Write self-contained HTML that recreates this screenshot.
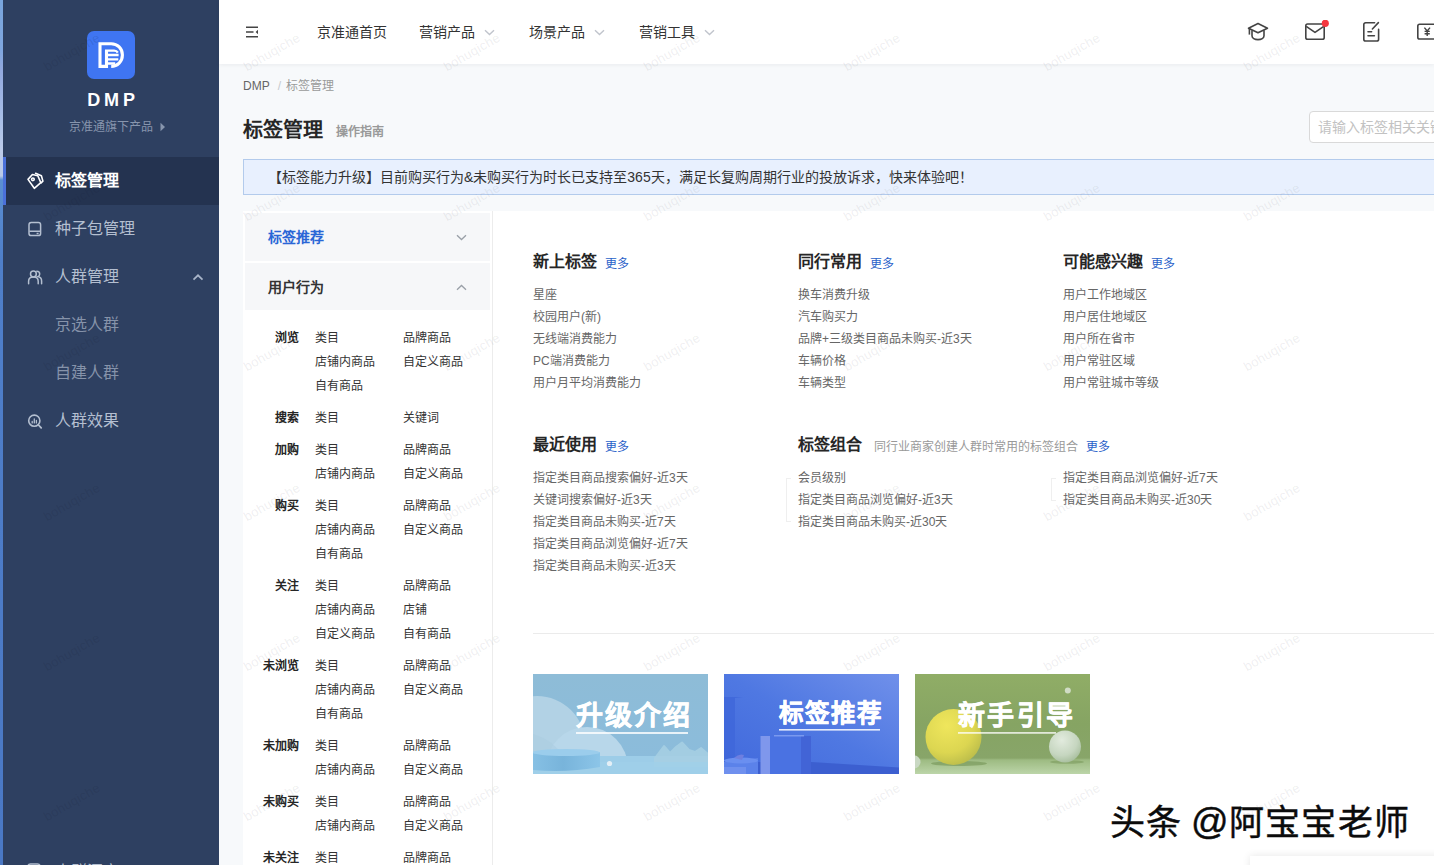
<!DOCTYPE html>
<html lang="zh-CN">
<head>
<meta charset="utf-8">
<title>DMP</title>
<style>
*{box-sizing:border-box;margin:0;padding:0}
html,body{width:1434px;height:865px;overflow:hidden;background:#f7f9fb;font-family:"Liberation Sans",sans-serif;color:#333}
#app{position:relative;width:1434px;height:865px;overflow:hidden;background:#f7f9fb}
.a{position:absolute;white-space:nowrap}
/* ---------- left edge strip + sidebar ---------- */
#strip{left:0;top:0;width:3px;height:865px;background:linear-gradient(180deg,#79a5dc 0,#7fa6de 50px,#93a9dd 70px,#a9bfe6 120px,#bccbe9 150px,#b9c9e8 176px,#5b8fd2 180px,#4f7fc9 260px,#4a78c4 865px)}
#side{left:3px;top:0;width:216px;height:865px;background:#2e4061}
#active{left:3px;top:157px;width:216px;height:48px;background:#243350}
#activebar{left:3px;top:157px;width:3px;height:48px;background:#4a70d9}
#logo{left:87px;top:31px;width:48px;height:48px;border-radius:7px;background:#3f75f2}
#dmp{left:3px;top:89px;width:216px;text-align:center;font-size:18px;line-height:22px;font-weight:bold;color:#fff;letter-spacing:3.8px;padding-left:4px}
#sub{left:69px;top:119px;font-size:12px;line-height:16px;color:#8795ad}
.mi{left:55px;font-size:16px;line-height:24px;color:#b4bfd0}
.mi.on{color:#fff;font-weight:bold}
.mi.s{color:#8693aa}
.ic{position:absolute}
/* ---------- top nav ---------- */
#top{left:219px;top:0;width:1215px;height:64px;background:#fff;box-shadow:0 1px 4px rgba(0,21,41,.06)}
.ni{top:22px;font-size:14px;line-height:20px;color:#333}
/* ---------- heading ---------- */
#bc{left:243px;top:78px;font-size:12px;line-height:16px;color:#666}
#bc i{font-style:normal;color:#c6c9ce;margin:0 5px 0 8px}
#bc span{color:#999}
#h1{left:243px;top:116px;font-size:20px;line-height:28px;font-weight:bold;color:#262626}
#guide{left:336px;top:124px;font-size:12px;line-height:16px;font-weight:bold;color:#999}
#search{left:1309px;top:111px;width:140px;height:32px;background:#fff;border:1px solid #d9d9d9;border-radius:4px}
#ph{left:1318px;top:117px;font-size:14px;line-height:20px;color:#c2c2c2}
#notice{left:243px;top:159px;width:1200px;height:36px;background:#e8f0fe;border:1px solid #b3cbec}
#ntxt{left:268px;top:167px;font-size:14px;line-height:20px;color:#333}

/* ---------- card ---------- */
#card{left:243px;top:211px;width:1200px;height:660px;background:#fff}
.ph{left:245px;width:245px;background:#f6f7f9}
.pt{left:268px;font-size:14px;line-height:20px;font-weight:bold;color:#333}
#vline{left:492px;top:211px;width:1px;height:660px;background:#ececec}
.r{left:243px;font-size:12px;line-height:24px;color:#333}
.r b{display:inline-block;width:56px;text-align:right;margin-right:16px;color:#262626}
.r span{display:inline-block;width:88px}
.st{font-size:16px;line-height:24px;font-weight:bold;color:#262626}
.more{font-size:12px;line-height:16px;color:#2a62c9}
.li{font-size:12px;line-height:22px;color:#666}
.desc{font-size:12px;line-height:16px;color:#999}
#hr{left:533px;top:633px;width:910px;height:1px;background:#ebebeb}
.bk{width:5px;border:1px solid #efefef;border-right:none}

.bn{top:674px;width:175px;height:100px;overflow:hidden}
.bn svg{display:block}
.bt{position:absolute;color:#fff;font-weight:bold;white-space:nowrap;-webkit-text-stroke:.5px #fff}
.wm{top:801px;font-size:35px;line-height:44px;color:#0b0b0b;letter-spacing:1.200px;-webkit-text-stroke:.45px #0b0b0b;text-shadow:1.500px 1.500px 0 #fff,-1px -1px 0 #fff,1.500px -1px 0 #fff,-1px 1.500px 0 #fff}
#fbox{left:1250px;top:856px;width:200px;height:30px;background:#fff;box-shadow:0 0 8px rgba(0,0,0,.10)}
.w{position:absolute;font-size:13px;line-height:16px;color:rgba(120,125,135,.13);transform:rotate(-30deg);transform-origin:left bottom;white-space:nowrap;letter-spacing:.3px}
.w.d{color:rgba(20,28,48,.12)}
</style>
</head>
<body>
<div id="app">
<!-- SIDEBAR -->
<div class="a" id="strip"></div>
<div class="a" id="side"></div>
<div class="a" id="active"></div>
<div class="a" id="activebar"></div>
<div class="a" id="logo">
<svg width="48" height="48" viewBox="0 0 48 48" fill="none" stroke="#fff">
<path d="M19.500 35.400H13V12.700h11.200c6.300 0 11.200 4.900 11.200 11.350S30.500 35.400 24.200 35.400" stroke-width="3.100"/>
<path d="M19.500 37V19.300" stroke-width="3.100"/>
<path d="M18 19.600h9.200c1.500 0 3 1 3.600 2M21 24h10.600M21 28.300h10.300M21 32.500h7.200" stroke-width="2.300"/>
</svg>
</div>
<div class="a" id="dmp">DMP</div>
<div class="a" id="sub">京准通旗下产品</div>
<svg class="ic" style="left:160px;top:122px" width="6" height="10" viewBox="0 0 6 10"><path d="M0.5 0.8L5 5 0.5 9.2z" fill="#8795ad"/></svg>

<div class="a mi on" style="top:169px">标签管理</div>
<div class="a mi" style="top:217px">种子包管理</div>
<div class="a mi" style="top:265px">人群管理</div>
<div class="a mi s" style="top:313px">京选人群</div>
<div class="a mi s" style="top:361px">自建人群</div>
<div class="a mi" style="top:409px">人群效果</div>
<div class="a mi" style="top:860px">人群洞察</div>

<!-- sidebar icons -->
<svg class="ic" style="left:26px;top:172px" width="18" height="18" viewBox="0 0 18 18" fill="none" stroke="#fff" stroke-width="1.600" stroke-linejoin="round" stroke-linecap="round"><path d="M2 7.400L6.400 2.500l5.400 1.300 3 6.800-6.500 5.700z"/><path d="M9.600 1.300l5.800 2.500 1.500 5.300-1.800 1.700"/><circle cx="6.900" cy="7.300" r="1.350"/></svg>
<svg class="ic" style="left:27px;top:220px" width="16" height="18" viewBox="0 0 16 18" fill="none" stroke="#b4bfd0" stroke-width="1.5"><rect x="2" y="2.6" width="11.6" height="13" rx="2.2"/><path d="M2.4 11.2h11M9.6 13.6h2"/></svg>
<svg class="ic" style="left:26px;top:268px" width="18" height="18" viewBox="0 0 18 18" fill="none" stroke="#b4bfd0" stroke-width="1.500" stroke-linecap="round"><circle cx="7.400" cy="6" r="2.900"/><path d="M2.600 15.800v-2.500c0-2.500 1.900-4.200 4.800-4.200s4.800 1.700 4.800 4.200v2.500"/><path d="M10.800 3.200c1.700 0 2.900 1.200 2.900 2.800 0 1.200-.7 2.200-1.700 2.600 2.200.5 3.600 2.100 3.600 4.300v2.900"/></svg>
<svg class="ic" style="left:26px;top:412px" width="18" height="18" viewBox="0 0 18 18" fill="none" stroke="#b4bfd0" stroke-width="1.600" stroke-linecap="round"><circle cx="8.300" cy="8.700" r="5.600"/><path d="M12.500 13l2.700 2.800" stroke-width="1.800"/><path d="M6.200 9.400v1.500M8.300 7v3.900M10.400 8.400v2.500" stroke-width="1.300"/></svg>
<svg class="ic" style="left:192px;top:273px" width="12" height="8" viewBox="0 0 12 8" fill="none" stroke="#a9b5c9" stroke-width="1.7"><path d="M1.500 6.700L6 2.300l4.500 4.400"/></svg>
<svg class="ic" style="left:26px;top:863px" width="18" height="8" viewBox="0 0 18 8" fill="none" stroke="#b4bfd0" stroke-width="1.6"><rect x="2" y="1" width="12" height="14" rx="2.500"/></svg>

<!-- TOP NAV -->
<div class="a" id="top"></div>
<svg class="ic" style="left:245px;top:26px" width="14" height="12" viewBox="0 0 14 12" fill="none" stroke="#444" stroke-width="1.5"><path d="M1 1.200h12M1 6h7.500M1 10.800h12"/><path d="M13 3.800L10.600 6 13 8.200z" fill="#444" stroke="none"/></svg>
<div class="a ni" style="left:317px">京准通首页</div>
<div class="a ni" style="left:419px">营销产品</div>
<div class="a ni" style="left:529px">场景产品</div>
<div class="a ni" style="left:639px">营销工具</div>
<svg class="ic" style="left:484px;top:29px" width="11" height="7" viewBox="0 0 11 7" fill="none" stroke="#c0c4cc" stroke-width="1.400"><path d="M1 1.200l4.500 4.300L10 1.200"/></svg>
<svg class="ic" style="left:594px;top:29px" width="11" height="7" viewBox="0 0 11 7" fill="none" stroke="#c0c4cc" stroke-width="1.400"><path d="M1 1.200l4.500 4.300L10 1.200"/></svg>
<svg class="ic" style="left:704px;top:29px" width="11" height="7" viewBox="0 0 11 7" fill="none" stroke="#c0c4cc" stroke-width="1.400"><path d="M1 1.200l4.500 4.300L10 1.200"/></svg>

<!-- top-right icons -->
<svg class="ic" style="left:1246px;top:20px" width="24" height="24" viewBox="0 0 24 24" fill="none" stroke="#444" stroke-width="1.600" stroke-linejoin="round"><path d="M2.500 8.200L12 3.500l9.500 4.700L12 12.800z"/><path d="M6 10.200v5.600c0 2.200 2.600 3.800 6 3.800s6-1.600 6-3.800v-5.600"/><path d="M3.400 8.800v5.800"/></svg>
<svg class="ic" style="left:1303px;top:20px" width="26" height="24" viewBox="0 0 26 24" fill="none" stroke="#444" stroke-width="1.600" stroke-linejoin="round"><rect x="2.800" y="4" width="18.400" height="15.200" rx="1.800"/><path d="M3.200 6.400l8.800 6 8.800-6"/><circle cx="22.300" cy="3.300" r="3.600" fill="#f5373f" stroke="none"/></svg>
<svg class="ic" style="left:1360px;top:20px" width="24" height="24" viewBox="0 0 24 24" fill="none" stroke="#444" stroke-width="1.600" stroke-linejoin="round" stroke-linecap="round"><path d="M14.600 2.800H5.600c-1 0-1.800.8-1.800 1.800v14.600c0 1 .8 1.800 1.800 1.800h11.200c1 0 1.800-.8 1.800-1.800V9.400"/><path d="M12.400 9l6-6.400"/><path d="M8 11.800h3.600M8 15.800h6.400"/></svg>
<svg class="ic" style="left:1416px;top:20px" width="24" height="24" viewBox="0 0 24 24" fill="none" stroke="#444" stroke-width="1.600" stroke-linejoin="round"><rect x="1.800" y="4.200" width="24" height="14.800" rx="1.800"/><path d="M8.400 7.600l2.800 3.400 2.800-3.400M11.200 11v5M8.600 11.400h5.200M8.600 13.800h5.200" stroke-width="1.400"/></svg>

<!-- HEADING -->
<div class="a" id="bc">DMP<i>/</i><span>标签管理</span></div>
<div class="a" id="h1">标签管理</div>
<div class="a" id="guide">操作指南</div>
<div class="a" id="search"></div>
<div class="a" id="ph">请输入标签相关关键词</div>
<div class="a" id="notice"></div>
<div class="a" id="ntxt">【标签能力升级】目前购买行为&amp;未购买行为时长已支持至365天，满足长复购周期行业的投放诉求，快来体验吧！</div>

<div class="a" id="card"></div>
<div class="a ph" style="top:213px;height:48px"></div>
<div class="a ph" style="top:263px;height:47px"></div>
<div class="a pt" style="top:227px;color:#2a66d6">标签推荐</div>
<div class="a pt" style="top:277px">用户行为</div>
<svg class="ic" style="left:456px;top:234px" width="11" height="7" viewBox="0 0 11 7" fill="none" stroke="#9aa0a8" stroke-width="1.3"><path d="M1 1.200l4.500 4.300L10 1.200"/></svg>
<svg class="ic" style="left:456px;top:284px" width="11" height="7" viewBox="0 0 11 7" fill="none" stroke="#9aa0a8" stroke-width="1.3"><path d="M1 5.800l4.500-4.300L10 5.800"/></svg>
<div class="a" id="vline"></div>
<div class="a r" style="top:326px"><b>浏览</b><span>类目</span><span>品牌商品</span></div>
<div class="a r" style="top:350px"><b></b><span>店铺内商品</span><span>自定义商品</span></div>
<div class="a r" style="top:374px"><b></b><span>自有商品</span><span></span></div>
<div class="a r" style="top:406px"><b>搜索</b><span>类目</span><span>关键词</span></div>
<div class="a r" style="top:438px"><b>加购</b><span>类目</span><span>品牌商品</span></div>
<div class="a r" style="top:462px"><b></b><span>店铺内商品</span><span>自定义商品</span></div>
<div class="a r" style="top:494px"><b>购买</b><span>类目</span><span>品牌商品</span></div>
<div class="a r" style="top:518px"><b></b><span>店铺内商品</span><span>自定义商品</span></div>
<div class="a r" style="top:542px"><b></b><span>自有商品</span><span></span></div>
<div class="a r" style="top:574px"><b>关注</b><span>类目</span><span>品牌商品</span></div>
<div class="a r" style="top:598px"><b></b><span>店铺内商品</span><span>店铺</span></div>
<div class="a r" style="top:622px"><b></b><span>自定义商品</span><span>自有商品</span></div>
<div class="a r" style="top:654px"><b>未浏览</b><span>类目</span><span>品牌商品</span></div>
<div class="a r" style="top:678px"><b></b><span>店铺内商品</span><span>自定义商品</span></div>
<div class="a r" style="top:702px"><b></b><span>自有商品</span><span></span></div>
<div class="a r" style="top:734px"><b>未加购</b><span>类目</span><span>品牌商品</span></div>
<div class="a r" style="top:758px"><b></b><span>店铺内商品</span><span>自定义商品</span></div>
<div class="a r" style="top:790px"><b>未购买</b><span>类目</span><span>品牌商品</span></div>
<div class="a r" style="top:814px"><b></b><span>店铺内商品</span><span>自定义商品</span></div>
<div class="a r" style="top:846px"><b>未关注</b><span>类目</span><span>品牌商品</span></div>
<div class="a st" style="left:533px;top:250px">新上标签</div>
<div class="a more" style="left:605px;top:256px">更多</div>
<div class="a li" style="left:533px;top:284px">星座</div>
<div class="a li" style="left:533px;top:306px">校园用户(新)</div>
<div class="a li" style="left:533px;top:328px">无线端消费能力</div>
<div class="a li" style="left:533px;top:350px">PC端消费能力</div>
<div class="a li" style="left:533px;top:372px">用户月平均消费能力</div>
<div class="a st" style="left:798px;top:250px">同行常用</div>
<div class="a more" style="left:870px;top:256px">更多</div>
<div class="a li" style="left:798px;top:284px">换车消费升级</div>
<div class="a li" style="left:798px;top:306px">汽车购买力</div>
<div class="a li" style="left:798px;top:328px">品牌+三级类目商品未购买-近3天</div>
<div class="a li" style="left:798px;top:350px">车辆价格</div>
<div class="a li" style="left:798px;top:372px">车辆类型</div>
<div class="a st" style="left:1063px;top:250px">可能感兴趣</div>
<div class="a more" style="left:1151px;top:256px">更多</div>
<div class="a li" style="left:1063px;top:284px">用户工作地域区</div>
<div class="a li" style="left:1063px;top:306px">用户居住地域区</div>
<div class="a li" style="left:1063px;top:328px">用户所在省市</div>
<div class="a li" style="left:1063px;top:350px">用户常驻区域</div>
<div class="a li" style="left:1063px;top:372px">用户常驻城市等级</div>
<div class="a st" style="left:533px;top:433px">最近使用</div>
<div class="a more" style="left:605px;top:439px">更多</div>
<div class="a li" style="left:533px;top:467px">指定类目商品搜索偏好-近3天</div>
<div class="a li" style="left:533px;top:489px">关键词搜索偏好-近3天</div>
<div class="a li" style="left:533px;top:511px">指定类目商品未购买-近7天</div>
<div class="a li" style="left:533px;top:533px">指定类目商品浏览偏好-近7天</div>
<div class="a li" style="left:533px;top:555px">指定类目商品未购买-近3天</div>
<div class="a st" style="left:798px;top:433px">标签组合</div>
<div class="a desc" style="left:874px;top:439px">同行业商家创建人群时常用的标签组合</div>
<div class="a more" style="left:1086px;top:439px">更多</div>
<div class="a li" style="left:798px;top:467px">会员级别</div>
<div class="a li" style="left:798px;top:489px">指定类目商品浏览偏好-近3天</div>
<div class="a li" style="left:798px;top:511px">指定类目商品未购买-近30天</div>
<div class="a li" style="left:1063px;top:467px">指定类目商品浏览偏好-近7天</div>
<div class="a li" style="left:1063px;top:489px">指定类目商品未购买-近30天</div>
<div class="a bk" style="left:786px;top:478px;height:44px"></div>
<div class="a bk" style="left:1051px;top:478px;height:23px"></div>
<div class="a" id="hr"></div>
<div class="a bn" style="left:533px">
<svg width="175" height="100" viewBox="0 0 175 100">
<defs>
<linearGradient id="b1" x1="0" y1="0" x2="0" y2="1"><stop offset="0" stop-color="#8ebcd7"/><stop offset="1" stop-color="#8bbcdc"/></linearGradient>
<linearGradient id="b1c" x1="0" y1="0" x2="1" y2="0"><stop offset="0" stop-color="#86c0e4"/><stop offset=".45" stop-color="#78b4db"/><stop offset="1" stop-color="#8cc5e8"/></linearGradient>
</defs>
<rect width="175" height="100" fill="url(#b1)"/>
<rect y="82" width="175" height="18" fill="#9dcde8"/>
<circle cx="4" cy="70" r="48" fill="#b2d2e5"/>
<circle cx="54" cy="94" r="41" fill="#b8d7ea"/>
<path d="M0 60 Q20 66 30 82 L0 82z" fill="#a9cbe0" opacity=".5"/>
<rect y="82" width="175" height="18" fill="#9dcde8"/>
<path d="M122 84 L131 72 L137 79 L143 73 L149 68.500 L156 76 L162 78 L168 74 L175 80 L175 92 L122 92z" fill="#a8d0e4" stroke="#a8d0e4" stroke-width="2" stroke-linejoin="round" opacity=".85"/>
<rect y="88" width="175" height="12" fill="#9fd0ea" opacity=".7"/>
<path d="M0 78 L67 78 L67 93 Q33 99 0 96z" fill="url(#b1c)"/>
<ellipse cx="33" cy="78.500" rx="34" ry="3.500" fill="#9bcdec"/>
<circle cx="76.500" cy="89.500" r="2.600" fill="#e4eff6"/>
<rect x="43" y="58" width="112" height="2" fill="#fff" opacity=".8"/>
</svg>
<div class="bt" style="left:42.500px;top:24px;font-size:27px;line-height:36px;letter-spacing:2.100px">升级介绍</div>
</div>
<div class="a bn" style="left:724px">
<svg width="175" height="100" viewBox="0 0 175 100">
<defs>
<linearGradient id="b2" x1="0" y1="1" x2="1" y2="0"><stop offset="0" stop-color="#4169dc"/><stop offset=".5" stop-color="#4f78e2"/><stop offset="1" stop-color="#7090ea"/></linearGradient>
</defs>
<rect width="175" height="100" fill="url(#b2)"/>
<path d="M0 23 L19 23 L11 24 L11 88 L0 90z" fill="#3f67d9" opacity=".8"/>
<path d="M87 88 L175 93.500 L175 100 L0 100 L0 88z" fill="#3c5fd0"/>
<path d="M0 88 L34 84 L34 100 L0 100z" fill="#5b82ea"/>
<ellipse cx="17" cy="86.500" rx="17" ry="3" fill="#6a8ff0"/>
<path d="M10 84 Q15 79 20 81 L18 86z" fill="#6e7fe0"/>
<rect x="0" y="93" width="22" height="7" fill="#7d9af0" opacity=".6"/>
<rect x="46" y="62" width="31" height="38" fill="#4a72e2"/>
<rect x="36.500" y="62" width="9.500" height="38" fill="#7f97ec"/>
<rect x="77" y="62" width="10" height="38" fill="#4264d6"/>
<rect x="50" y="61" width="30" height="1.500" fill="#86a2f2" opacity=".8"/>
<rect x="55" y="55" width="101" height="1.600" fill="#fff" opacity=".85"/>
</svg>
<div class="bt" style="left:54.500px;top:23px;font-size:24.500px;line-height:34px;letter-spacing:2.200px">标签推荐</div>
</div>
<div class="a bn" style="left:915px">
<svg width="175" height="100" viewBox="0 0 175 100">
<defs>
<linearGradient id="b3" x1="0" y1="0" x2="0" y2="1"><stop offset="0" stop-color="#90ad66"/><stop offset=".5" stop-color="#86a463"/><stop offset=".84" stop-color="#88a569"/><stop offset=".86" stop-color="#9dbb82"/><stop offset="1" stop-color="#bcd5a9"/></linearGradient>
<radialGradient id="yb" cx=".38" cy=".3" r=".8"><stop offset="0" stop-color="#efe65c"/><stop offset=".6" stop-color="#dcd651"/><stop offset="1" stop-color="#b4b749"/></radialGradient>
<radialGradient id="wb" cx=".4" cy=".3" r=".8"><stop offset="0" stop-color="#e2ebde"/><stop offset=".6" stop-color="#c6d6c0"/><stop offset="1" stop-color="#9fb894"/></radialGradient>
</defs>
<rect width="175" height="100" fill="url(#b3)"/>
<ellipse cx="44" cy="89.500" rx="28" ry="2.500" fill="#6f8f50" opacity=".55"/>
<ellipse cx="152" cy="88" rx="17" ry="1.800" fill="#6f8f50" opacity=".45"/>
<circle cx="38.500" cy="63" r="28" fill="url(#yb)"/>
<rect x="43" y="58" width="98" height="1.800" fill="#fff" opacity=".75"/>
<circle cx="150" cy="72.500" r="16" fill="url(#wb)"/>
<circle cx="152.800" cy="16.600" r="3" fill="#d0dcc5"/>
<circle cx="-1" cy="88" r="6.500" fill="#c9d8c3"/>
</svg>
<div class="bt" style="left:42.500px;top:24px;font-size:27px;line-height:36px;letter-spacing:2.500px">新手引导</div>
</div>
<div class="a" id="fbox"></div>
<div class="a wm" style="left:1110px">头条</div><div class="a wm" style="left:1191px;font-size:37px;letter-spacing:0;top:800px">@</div><div class="a wm" style="left:1229px">阿宝宝老师</div>
<div class="a" id="wmk" style="left:0;top:0;width:1434px;height:865px;pointer-events:none"><span class="w d" style="left:49px;top:59px">bohuqiche</span><span class="w" style="left:249px;top:59px">bohuqiche</span><span class="w" style="left:449px;top:59px">bohuqiche</span><span class="w" style="left:649px;top:59px">bohuqiche</span><span class="w" style="left:849px;top:59px">bohuqiche</span><span class="w" style="left:1049px;top:59px">bohuqiche</span><span class="w" style="left:1249px;top:59px">bohuqiche</span><span class="w d" style="left:49px;top:209px">bohuqiche</span><span class="w" style="left:249px;top:209px">bohuqiche</span><span class="w" style="left:449px;top:209px">bohuqiche</span><span class="w" style="left:649px;top:209px">bohuqiche</span><span class="w" style="left:849px;top:209px">bohuqiche</span><span class="w" style="left:1049px;top:209px">bohuqiche</span><span class="w" style="left:1249px;top:209px">bohuqiche</span><span class="w d" style="left:49px;top:359px">bohuqiche</span><span class="w" style="left:249px;top:359px">bohuqiche</span><span class="w" style="left:449px;top:359px">bohuqiche</span><span class="w" style="left:649px;top:359px">bohuqiche</span><span class="w" style="left:849px;top:359px">bohuqiche</span><span class="w" style="left:1049px;top:359px">bohuqiche</span><span class="w" style="left:1249px;top:359px">bohuqiche</span><span class="w d" style="left:49px;top:509px">bohuqiche</span><span class="w" style="left:249px;top:509px">bohuqiche</span><span class="w" style="left:449px;top:509px">bohuqiche</span><span class="w" style="left:649px;top:509px">bohuqiche</span><span class="w" style="left:849px;top:509px">bohuqiche</span><span class="w" style="left:1049px;top:509px">bohuqiche</span><span class="w" style="left:1249px;top:509px">bohuqiche</span><span class="w d" style="left:49px;top:659px">bohuqiche</span><span class="w" style="left:249px;top:659px">bohuqiche</span><span class="w" style="left:449px;top:659px">bohuqiche</span><span class="w" style="left:649px;top:659px">bohuqiche</span><span class="w" style="left:849px;top:659px">bohuqiche</span><span class="w" style="left:1049px;top:659px">bohuqiche</span><span class="w" style="left:1249px;top:659px">bohuqiche</span><span class="w d" style="left:49px;top:809px">bohuqiche</span><span class="w" style="left:249px;top:809px">bohuqiche</span><span class="w" style="left:449px;top:809px">bohuqiche</span><span class="w" style="left:649px;top:809px">bohuqiche</span><span class="w" style="left:849px;top:809px">bohuqiche</span><span class="w" style="left:1049px;top:809px">bohuqiche</span><span class="w" style="left:1249px;top:809px">bohuqiche</span></div>
</div>
</body>
</html>
